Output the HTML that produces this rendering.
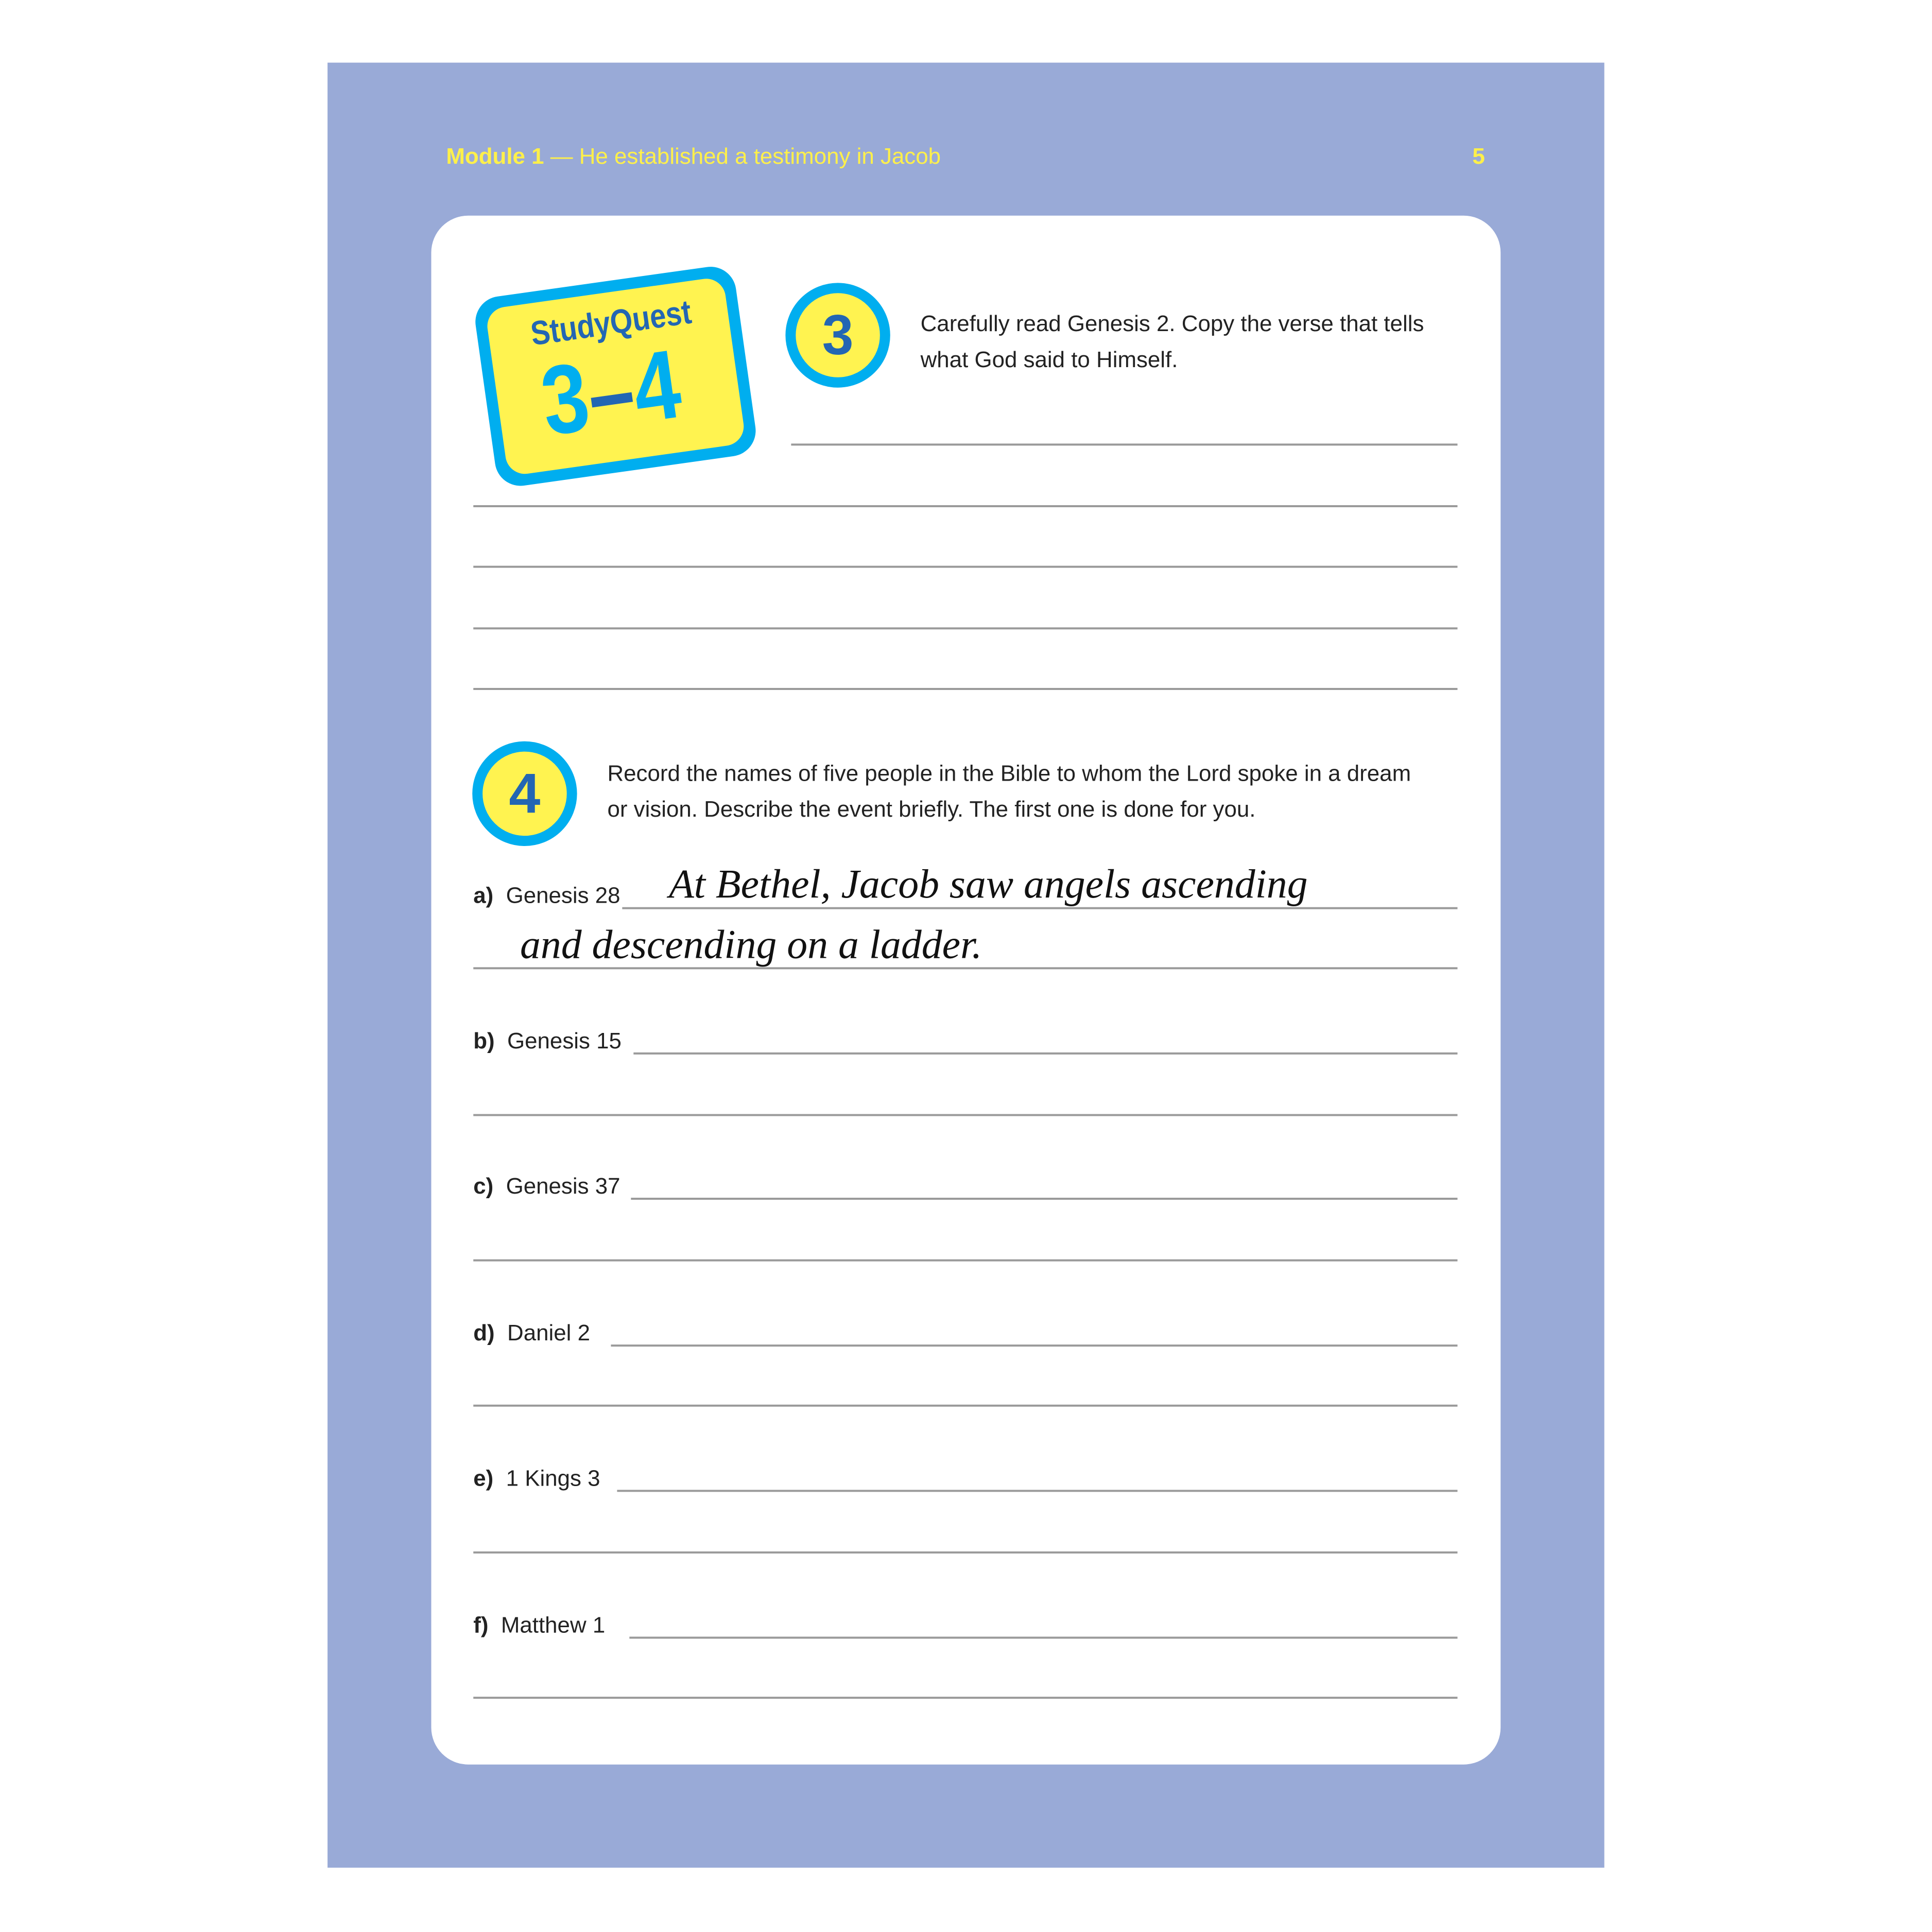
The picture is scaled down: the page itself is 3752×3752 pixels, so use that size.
<!DOCTYPE html>
<html><head><meta charset="utf-8"><style>
html,body{margin:0;padding:0;}
body{width:3752px;height:3752px;background:#fff;position:relative;overflow:hidden;font-family:"Liberation Sans",sans-serif;}
#w{position:absolute;left:0;top:0;width:3752px;height:3752px;transform:scale(0.997);transform-origin:0 0;}
.abs{position:absolute;}
.page{left:638px;top:122px;width:2487px;height:3516px;background:#99aad7;}
.card{left:840px;top:420px;width:2083px;height:3017px;background:#fff;border-radius:72px;}
.hdr{left:869px;top:280px;font-size:44px;color:#fff04a;white-space:nowrap;}
.pn{left:2868px;top:280px;font-size:44px;color:#fff04a;font-weight:bold;}
.ln{position:absolute;height:4px;background:#9a9a9a;}
.t{position:absolute;font-size:44px;color:#222;white-space:nowrap;line-height:70px;}
.circ{position:absolute;width:164px;height:164px;border:20px solid #00aeef;border-radius:50%;background:#fff350;color:#2366b3;font-weight:bold;font-size:110px;text-align:center;line-height:164px;}
.hw{position:absolute;font-family:"Liberation Serif",serif;font-style:italic;font-size:80px;color:#111;white-space:nowrap;}
b{font-weight:bold;}
</style></head><body><div id="w">
<div class="abs page"></div>
<div class="abs card"></div>
<div class="abs hdr"><b>Module 1</b> — He established a testimony in Jacob</div>
<div class="abs pn">5</div>

<!-- badge -->
<div class="abs" style="left:943px;top:547px;width:512px;height:372px;transform:rotate(-8deg);background:#00aeef;border-radius:50px;"></div>
<div class="abs" style="left:965px;top:569px;width:468px;height:328px;transform:rotate(-8deg);background:#fff350;border-radius:38px;"></div>
<div class="abs" style="left:950px;top:590px;width:480px;text-align:center;transform:rotate(-8deg) scaleX(0.85);font-weight:bold;font-size:66px;color:#2366b3;">StudyQuest</div>
<div class="abs" style="left:950px;top:665px;width:480px;text-align:center;transform:rotate(-8deg) scaleX(0.85);font-weight:bold;font-size:190px;line-height:200px;color:#00aeef;">3<span style="color:#2366b3">–</span>4</div>

<div class="circ" style="left:1530px;top:551px;">3</div>
<div class="t" style="left:1793px;top:596px;">Carefully read Genesis 2. Copy the verse that tells</div>
<div class="t" style="left:1793px;top:666px;">what God said to Himself.</div>
<div class="ln" style="left:1541px;top:864px;width:1298px;"></div>
<div class="ln" style="left:922px;top:984px;width:1917px;"></div>
<div class="ln" style="left:922px;top:1102px;width:1917px;"></div>
<div class="ln" style="left:922px;top:1222px;width:1917px;"></div>
<div class="ln" style="left:922px;top:1340px;width:1917px;"></div>

<div class="circ" style="left:920px;top:1444px;">4</div>
<div class="t" style="left:1183px;top:1472px;">Record the names of five people in the Bible to whom the Lord spoke in a dream</div>
<div class="t" style="left:1183px;top:1542px;">or vision. Describe the event briefly. The first one is done for you.</div>

<div class="t" style="left:922px;top:1710px;"><b>a)</b>&nbsp; Genesis 28</div>
<div class="hw" style="left:1303px;top:1677px;">At Bethel, Jacob saw angels ascending</div>
<div class="ln" style="left:1212px;top:1767px;width:1627px;"></div>
<div class="hw" style="left:1013px;top:1795px;">and descending on a ladder.</div>
<div class="ln" style="left:922px;top:1884px;width:1917px;"></div>

<div class="t" style="left:922px;top:1993px;"><b>b)</b>&nbsp; Genesis 15</div>
<div class="ln" style="left:1234px;top:2050px;width:1605px;"></div>
<div class="ln" style="left:922px;top:2170px;width:1917px;"></div>

<div class="t" style="left:922px;top:2276px;"><b>c)</b>&nbsp; Genesis 37</div>
<div class="ln" style="left:1229px;top:2333px;width:1610px;"></div>
<div class="ln" style="left:922px;top:2453px;width:1917px;"></div>

<div class="t" style="left:922px;top:2562px;"><b>d)</b>&nbsp; Daniel 2</div>
<div class="ln" style="left:1190px;top:2619px;width:1649px;"></div>
<div class="ln" style="left:922px;top:2736px;width:1917px;"></div>

<div class="t" style="left:922px;top:2845px;"><b>e)</b>&nbsp; 1 Kings 3</div>
<div class="ln" style="left:1202px;top:2902px;width:1637px;"></div>
<div class="ln" style="left:922px;top:3022px;width:1917px;"></div>

<div class="t" style="left:922px;top:3131px;"><b>f)</b>&nbsp; Matthew 1</div>
<div class="ln" style="left:1226px;top:3188px;width:1613px;"></div>
<div class="ln" style="left:922px;top:3305px;width:1917px;"></div>
</div></body></html>
